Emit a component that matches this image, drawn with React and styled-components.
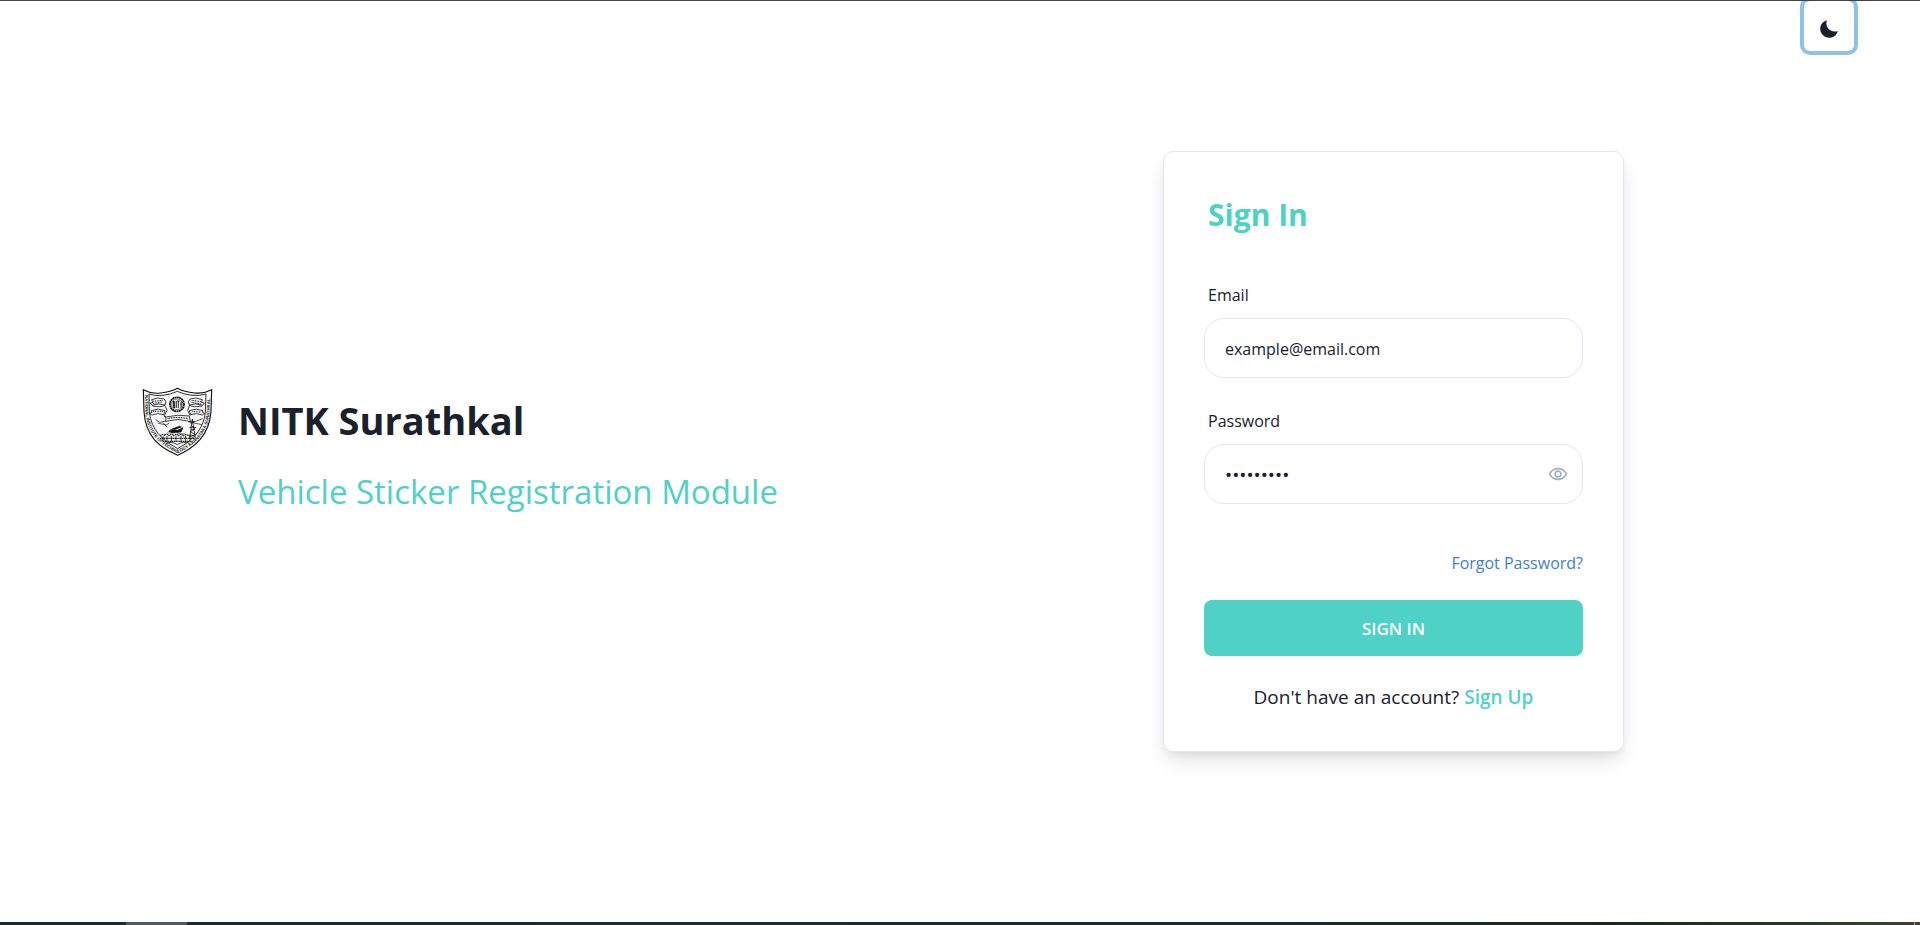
import React, { useState } from "react";
import styled, { createGlobalStyle } from "styled-components";
import { IoMdMoon } from "react-icons/io";
import { MdOutlineRemoveRedEye } from "react-icons/md";

const teal = "#4fd1c5";
const ink = "#1a202c";
const line = "#e2e8f0";

const GlobalStyle = createGlobalStyle`
  *, *::before, *::after { box-sizing: border-box; }
  body {
    margin: 0;
    background: #fff;
    color: ${ink};
    font-family: "Segoe UI", "Open Sans", "Noto Sans", sans-serif;
    font-size: 16px;
    line-height: 24px;
  }
  h1, h2, p { margin: 0; }
  button, input { font: inherit; color: inherit; }
`;

const Page = styled.div`
  min-height: 100vh;
  display: flex;
  flex-direction: column;
  border-top: 1px solid #434345;
  overflow: hidden;
`;

const TopBar = styled.header`
  display: flex;
  justify-content: flex-end;
  padding-right: 66px;
`;

const ThemeToggle = styled.button`
  display: grid;
  place-items: center;
  width: 50px;
  height: 50px;
  padding: 6px 0 0;
  border: 0;
  border-radius: 6px;
  background: #fff;
  box-shadow: 0 0 0 4px #8ec2ed;
  cursor: pointer;
`;

const Main = styled.main`
  flex: 1;
  display: flex;
  align-items: center;
  justify-content: space-between;
  gap: 40px;
  padding: 0 296px 71px 142px;
`;

const Brand = styled.section`
  display: flex;
  align-items: flex-start;
  gap: 25px;
`;

const BrandText = styled.div`
  display: flex;
  flex-direction: column;
  gap: 20px;
  padding-top: 5px;
`;

const BrandName = styled.h1`
  font-size: 38px;
  line-height: 56px;
  font-weight: 700;
`;

const BrandTagline = styled.p`
  color: ${teal};
  font-size: 33px;
  line-height: 48px;
`;

const Card = styled.form`
  display: flex;
  flex-direction: column;
  width: 461px;
  padding: 39px 40px 42px;
  border: 1px solid ${line};
  border-radius: 10px;
  background: #fff;
  box-shadow: 0 10px 20px -3px rgba(0, 0, 0, 0.13), 0 4px 6px -2px rgba(0, 0, 0, 0.05);
`;

const CardTitle = styled.h2`
  margin-bottom: 44px;
  padding-left: 4px;
  color: ${teal};
  font-size: 30px;
  line-height: 48px;
  font-weight: 700;
`;

const Field = styled.div`
  display: flex;
  flex-direction: column;
  gap: 11px;
  margin-bottom: 31px;
`;

const FieldLabel = styled.label`
  padding-left: 4px;
`;

const InputShell = styled.div`
  display: flex;
  align-items: center;
  height: 60px;
  padding: 0 14px 0 20px;
  border: 1px solid ${line};
  border-radius: 20px;
`;

const TextInput = styled.input`
  flex: 1;
  min-width: 0;
  padding: 2px 0 0;
  border: 0;
  outline: 0;
  background: none;
  font-size: ${(p) => (p.type === "password" ? "19px" : "16px")};
`;

const RevealButton = styled.button`
  display: flex;
  padding: 0;
  border: 0;
  background: none;
  color: #a0aec0;
  cursor: pointer;
`;

const ForgotLink = styled.a`
  align-self: flex-end;
  margin: 16px 0 25px;
  color: #3d7fd0;
  text-decoration: none;
`;

const SubmitButton = styled.button`
  height: 56px;
  padding: 2px 0 0;
  border: 0;
  border-radius: 8px;
  background: ${teal};
  color: #fff;
  font-size: 17px;
  font-weight: 600;
  text-transform: uppercase;
  cursor: pointer;
`;

const SignUpPrompt = styled.p`
  margin-top: 29px;
  text-align: center;
  font-size: 19px;
  font-weight: 500;
`;

const SignUpLink = styled.a`
  color: ${teal};
  font-weight: 600;
  text-decoration: none;
`;

const TaskbarEdge = styled.footer`
  display: flex;
  height: 3px;
  padding-left: 126px;
  background: linear-gradient(90deg, #1d2b31 0%, #1b2a2d 50%, #17291f 84%, #223a26 93%, #43402f 100%);
`;

const TaskbarHighlight = styled.span`
  width: 61px;
  background: #4f5a5c;
`;

const TaskbarDivider = styled.span`
  width: 1px;
  margin: 0 5px 0 auto;
  background: #a5a59b;
`;

function Crest() {
  return (
    <svg width="71" height="69" viewBox="36 24 213 207" role="img" aria-label="NITK crest" fill="none" stroke="#111" strokeWidth="2.4">
      <path d="M40 32Q66 46 92 42Q122 39 142 28Q162 39 194 42Q220 45 245 32L243 98Q239 149 210 182Q184 211 143 229Q98 210 73 182Q45 148 42 98Z" fill="#f8f8f8" strokeWidth="3.4" />
      <path d="M57 45Q76 52 99 49Q124 46 142 37Q160 46 186 49Q208 51 228 45L226 100Q222 138 197 168Q175 193 143 209Q109 193 87 167Q62 138 58 99Z" strokeWidth="2.6" />
      <defs>
        <path id="crest-band" d="M45 48L46 98Q49 145 77 177Q103 204 143 222Q183 205 207 178Q235 146 239 98L241 48" />
      </defs>
      <text fill="#111" stroke="none" fontFamily="Liberation Sans, sans-serif" fontWeight="700" fontSize="13">
        <textPath href="#crest-band">NATIONAL INSTITUTE OF TECHNOLOGY KARNATAKA SURATHKAL</textPath>
      </text>
      <circle cx="141" cy="76" r="21" strokeWidth="5.5" strokeDasharray="6 1" />
      <circle cx="141" cy="76" r="16" strokeWidth="1.5" />
      <path d="M130 66V87M134 66V87M130 66L134 87M139 66V87M145 66V87M141 66H149M153 67V86M153 78L158 69" strokeWidth="2.6" />
      <path d="M65 62Q83 53 103 60Q112 69 105 78Q86 71 66 79L61 72L69 70ZM104 79Q93 86 67 81M64 95Q83 86 105 95L101 107Q84 100 66 108L59 103L66 100Z" />
      <path d="M217 62Q198 53 180 60Q171 69 178 78Q197 71 218 79L223 72L214 70ZM179 79Q189 86 216 81M219 95Q199 86 178 95L182 107Q199 100 217 108L224 103L217 100Z" />
      <path d="M70 67L98 64M69 74L96 69M70 97L98 97M185 64L214 68M185 70L213 75M187 98L213 99" strokeWidth="3" strokeDasharray="3 2" />
      <path d="M104 78L111 94L103 110M179 78L173 94L180 110M103 110Q112 121 106 128L118 125Q143 118 169 125L181 128L178 111Q143 105 108 114Z" />
      <path d="M113 119Q142 112 174 119" strokeWidth="3.5" strokeDasharray="3 2" />
      <path d="M77 122L89 130L106 126M83 132L108 138L117 133M98 130L112 145M174 128L216 137M181 133L218 119" strokeWidth="2" />
      <path d="M116 157L123 152L143 154L159 146L153 159L126 161Z" fill="#111" />
      <path d="M126 149L149 141L155 144L132 153Z" fill="#111" strokeWidth="1" />
      <path d="M110 162H133M141 164H164" strokeWidth="1.5" />
      <path d="M187 120L179 178M187 120L196 177M184 139L195 150L181 158L196 167L178 174M181 128H194M178 145H198M183 151H192" />
      <path d="M91 170Q97 163 104 169Q111 162 117 170Q124 163 131 170Q138 163 146 170Q153 163 160 170Q168 164 174 170Q182 166 190 171M90 178H195M98 187H187" strokeWidth="3.6" strokeDasharray="4 1.5" />
      <path d="M99 171V187M111 171V187M124 171V187M138 171V187M153 171V187M167 171V187M180 171V184M108 194Q123 185 142 197Q161 185 178 193" strokeWidth="2.4" />
    </svg>
  );
}

export default function App() {
  const [visible, setVisible] = useState(false);
  return (
    <>
      <GlobalStyle />
      <Page>
        <TopBar>
          <ThemeToggle type="button" aria-label="Switch to dark mode">
            <IoMdMoon size={22} />
          </ThemeToggle>
        </TopBar>
        <Main>
          <Brand>
            <Crest />
            <BrandText>
              <BrandName>NITK Surathkal</BrandName>
              <BrandTagline>Vehicle Sticker Registration Module</BrandTagline>
            </BrandText>
          </Brand>
          <Card onSubmit={(e) => e.preventDefault()}>
            <CardTitle>Sign In</CardTitle>
            <Field>
              <FieldLabel htmlFor="email">Email</FieldLabel>
              <InputShell>
                <TextInput id="email" type="email" defaultValue="example@email.com" />
              </InputShell>
            </Field>
            <Field>
              <FieldLabel htmlFor="password">Password</FieldLabel>
              <InputShell>
                <TextInput id="password" type={visible ? "text" : "password"} defaultValue="abcdefghi" />
                <RevealButton type="button" aria-label="Show password" onClick={() => setVisible(!visible)}>
                  <MdOutlineRemoveRedEye size={20} />
                </RevealButton>
              </InputShell>
            </Field>
            <ForgotLink href="#forgot">Forgot Password?</ForgotLink>
            <SubmitButton type="submit">Sign In</SubmitButton>
            <SignUpPrompt>
              Don't have an account? <SignUpLink href="#signup">Sign Up</SignUpLink>
            </SignUpPrompt>
          </Card>
        </Main>
        <TaskbarEdge>
          <TaskbarHighlight />
          <TaskbarDivider />
        </TaskbarEdge>
      </Page>
    </>
  );
}
